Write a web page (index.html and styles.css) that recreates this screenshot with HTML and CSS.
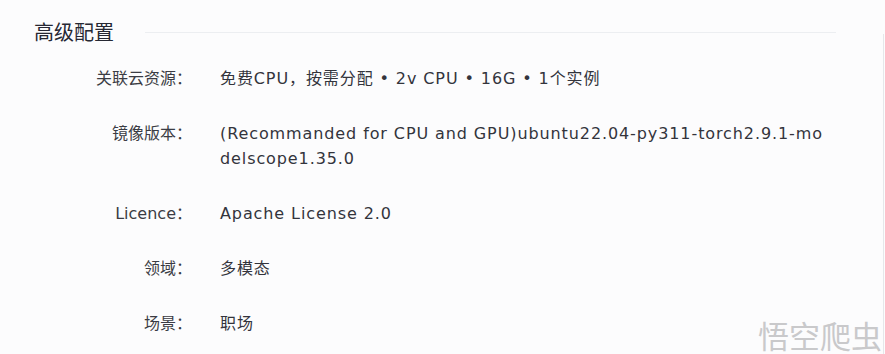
FILE: index.html
```html
<!DOCTYPE html>
<html lang="zh-CN">
<head>
  <meta charset="UTF-8">
  <meta name="viewport" content="width=device-width, initial-scale=1.0">
  <title>高级配置</title>
  <link rel="stylesheet" href="styles.css">
</head>
<body>
  <!-- Advanced config section -->
  <div class="config-section">
    <div class="section-header">
      <div class="section-title">高级配置</div>
      <div class="section-line"></div>
    </div>

    <div class="config-list">
      <div class="config-label">关联云资源：</div>
      <div class="config-value">免费CPU，按需分配 • 2v CPU • 16G • 1个实例</div>

      <div class="config-label">镜像版本：</div>
      <div class="config-value">(Recommanded for CPU and GPU)ubuntu22.04-py311-torch2.9.1-modelscope1.35.0</div>

      <div class="config-label">Licence：</div>
      <div class="config-value">Apache License 2.0</div>

      <div class="config-label">领域：</div>
      <div class="config-value">多模态</div>

      <div class="config-label">场景：</div>
      <div class="config-value">职场</div>
    </div>
  </div>

  <div class="right-edge"></div>
  <div class="watermark">悟空爬虫</div>
</body>
</html>
```

FILE: styles.css
```css
body, html {
  margin: 0;
  padding: 0;
  width: 100%;
  height: 100%;
  background: #fcfcfd;
  font-family: "DejaVu Sans", "Noto Sans CJK SC", sans-serif;
  overflow: hidden;
  position: relative;
}

/* Section */
.config-section {
  width: 836px;
  padding-top: 20px;
}

.section-header {
  display: flex;
  align-items: center;
  padding-left: 34px;
  gap: 31px;
}

.section-title {
  font-family: "Noto Sans CJK SC", sans-serif;
  font-size: 20px;
  line-height: 24px;
  color: #262833;
}

.section-line {
  flex: 1;
  height: 1px;
  background: #eceef1;
}

/* Rows */
.config-list {
  width: 831px;
  display: grid;
  grid-template-columns: 192px 1fr;
  column-gap: 28px;
  row-gap: 30px;
  margin-top: 22px;
  font-size: 16px;
  line-height: 25px;
}

.config-label {
  text-align: right;
  color: #3b3c44;
}

.config-value {
  color: #33343c;
  word-break: break-all;
  letter-spacing: 0.9px;
}

/* Scroll edge on the right */
.right-edge {
  position: absolute;
  top: 34px;
  right: 1px;
  width: 1px;
  height: 320px;
  background: #e6e7ea;
}

/* Watermark */
.watermark {
  position: absolute;
  right: 3px;
  bottom: 2px;
  font-family: "Noto Sans CJK SC", sans-serif;
  font-size: 31px;
  line-height: 34px;
  color: #c9c9cb;
}
```
